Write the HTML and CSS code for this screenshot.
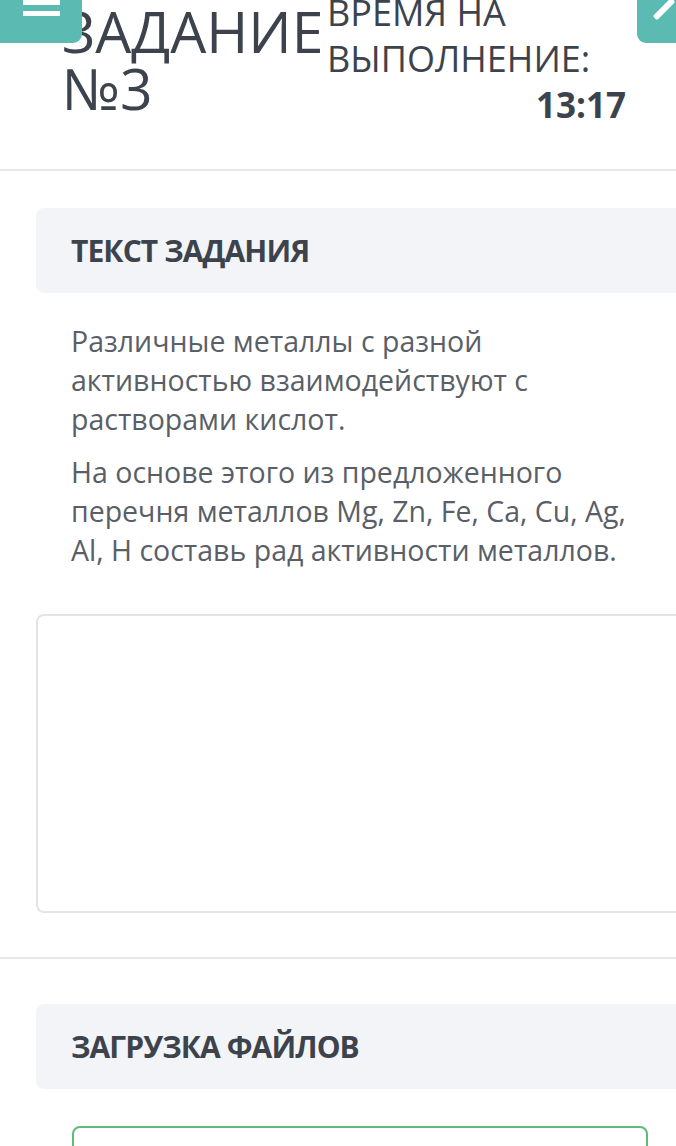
FILE: index.html
```html
<!doctype html>
<html lang="ru">
<head>
    <meta charset="UTF-8">
    <title>Задание №3</title>
    <link rel="stylesheet" href="styles.css">
</head>
<body>
<div class="page">
    <button class="menu-btn" type="button">
        <span></span><span></span><span></span>
    </button>
    <button class="edit-btn" type="button">
        <svg width="39" height="43" viewBox="0 0 39 43">
            <rect x="24" y="-4" width="6" height="26" rx="2" fill="#fff" transform="rotate(45 27 9)"/>
        </svg>
    </button>

    <div class="task-head">
        <h1 class="task-title">ЗАДАНИЕ<br>№3</h1>
        <div class="timer">
            <div class="timer-label">ВРЕМЯ НА<br>ВЫПОЛНЕНИЕ:</div>
            <div class="timer-value">13:17</div>
        </div>
    </div>

    <div class="section">
        <div class="section-title">ТЕКСТ ЗАДАНИЯ</div>
        <div class="task-text">
            <p>Различные металлы с разной активностью взаимодействуют с растворами кислот.</p>
            <p>На основе этого из предложенного перечня металлов Mg, Zn, Fe, Ca, Cu, Ag, Al, H составь рад активности металлов.</p>
        </div>
        <div class="answer"></div>
    </div>

    <div class="section upload">
        <div class="section-title">ЗАГРУЗКА ФАЙЛОВ</div>
        <div class="drop"></div>
    </div>
</div>
</body>
</html>
```

FILE: styles.css
```css
html, body{
    margin: 0;
    padding: 0;
    background: #fff;
}
body{
    font-family: "Open Sans", "Liberation Sans", sans-serif;
    color: #3d434c;
    overflow: hidden;
}
.page{
    position: relative;
    width: 676px;
    height: 1146px;
    overflow: hidden;
}

/* плавающие кнопки */
.menu-btn{
    position: absolute;
    left: 0;
    top: 0;
    width: 82px;
    height: 43px;
    border: none;
    padding: 0;
    background: #5bbab2;
    border-radius: 0 0 9px 0;
}
.menu-btn span{
    position: absolute;
    left: 23px;
    width: 37px;
    height: 5px;
    background: #fff;
}
.menu-btn span:nth-child(1){ top: -11px; }
.menu-btn span:nth-child(2){ top: 0; }
.menu-btn span:nth-child(3){ top: 11px; }
.edit-btn{
    position: absolute;
    left: 637px;
    top: 0;
    width: 39px;
    height: 43px;
    border: none;
    padding: 0;
    background: #5bbab2;
    border-radius: 0 0 0 9px;
}
.edit-btn svg{
    display: block;
}

/* шапка */
.task-head{
    display: flex;
    height: 169px;
    border-bottom: 2px solid #e7e8ea;
    padding-left: 62px;
}
.task-title{
    width: 265px;
    margin: 3px 0 0;
    font-size: 57px;
    font-weight: 400;
    line-height: 57px;
    white-space: nowrap;
}
.timer{
    width: 299px;
    margin-top: -10px;
}
.timer-label{
    font-size: 36px;
    line-height: 46px;
    white-space: nowrap;
}
.timer-value{
    text-align: right;
    font-size: 35px;
    font-weight: 700;
    line-height: 45px;
}

/* секции */
.section{
    padding: 37px 0 44px;
    border-bottom: 2px solid #e7e8ea;
}
.section.upload{
    border-bottom: none;
    padding-top: 45px;
}
.section-title{
    margin-left: 36px;
    margin-right: -20px;
    height: 85px;
    padding-left: 35px;
    display: flex;
    align-items: center;
    background: #f2f4f7;
    border-radius: 8px;
    font-size: 30px;
    font-weight: 700;
    letter-spacing: -0.9px;
}
.task-text{
    padding: 29px 36px 0 71px;
    color: #5a5f67;
    font-size: 28.5px;
    line-height: 39px;
}
.task-text p{
    margin: 0 0 14px;
}
.answer{
    margin: 44px -20px 0 36px;
    height: 295px;
    border: 2px solid #e3e4e6;
    border-radius: 8px;
}
.drop{
    margin: 37px 28px 0 72px;
    height: 60px;
    border: 2px solid #5fbb7a;
    border-radius: 8px;
}
```
